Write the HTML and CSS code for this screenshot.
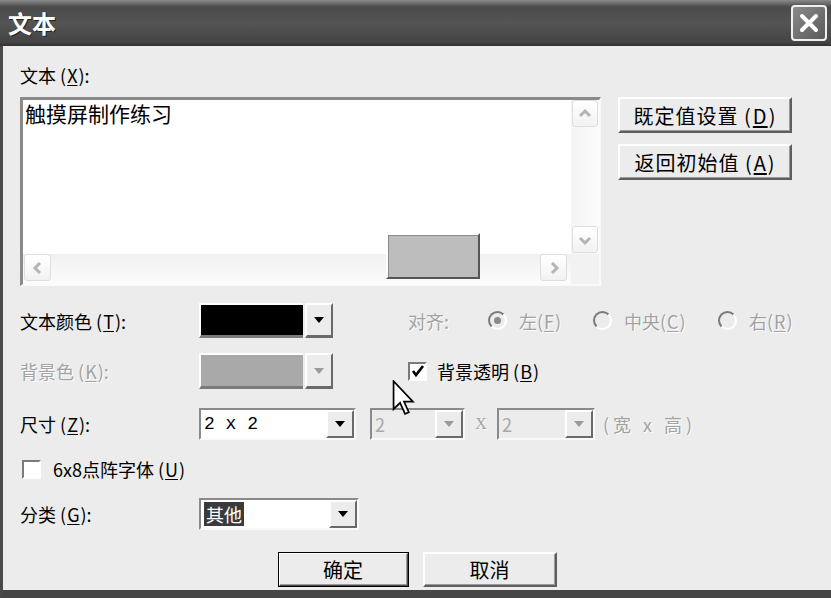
FILE: index.html
```html
<!DOCTYPE html>
<html lang="zh-CN">
<head>
    <meta charset="UTF-8">
    <meta name="viewport" content="width=device-width, initial-scale=1.0">
    <title>文本</title>
    <link rel="stylesheet" href="styles.css">
</head>
<body>
    <div class="dialog">
        <!-- Title bar -->
        <div class="titlebar">
            <span class="title">文本</span>
            <span class="close">
                <svg width="22" height="22" viewBox="0 0 22 22">
                    <path d="M4 4 L18 18 M18 4 L4 18" stroke="#fff" stroke-width="4" stroke-linecap="round"/>
                </svg>
            </span>
        </div>

        <div class="body">
            <div class="label-top">文本 (<u>X</u>):</div>

            <!-- Text box with the two side buttons -->
            <div class="text-row">
                <div class="textbox">
                    <div class="text-content">触摸屏制作练习</div>
                    <div class="vscroll">
                        <span class="sbtn">
                            <svg width="16" height="16" viewBox="0 0 16 16"><polyline points="3,10 8,5 13,10" fill="none" stroke="#b4b4b4" stroke-width="3"/></svg>
                        </span>
                        <span class="sbtn">
                            <svg width="16" height="16" viewBox="0 0 16 16"><polyline points="3,6 8,11 13,6" fill="none" stroke="#b4b4b4" stroke-width="3"/></svg>
                        </span>
                    </div>
                    <div class="hscroll">
                        <span class="sbtn">
                            <svg width="16" height="16" viewBox="0 0 16 16"><polyline points="10,3 5,8 10,13" fill="none" stroke="#b4b4b4" stroke-width="3"/></svg>
                        </span>
                        <span class="sbtn">
                            <svg width="16" height="16" viewBox="0 0 16 16"><polyline points="6,3 11,8 6,13" fill="none" stroke="#b4b4b4" stroke-width="3"/></svg>
                        </span>
                    </div>
                    <div class="corner"></div>
                    <!-- gray preview box sitting over the edit area -->
                    <div class="swatch"></div>
                </div>
                <div class="side-buttons">
                    <button type="button" class="btn side">既定值设置 (<u>D</u>)</button>
                    <button type="button" class="btn side">返回初始值 (<u>A</u>)</button>
                </div>
            </div>

            <!-- Text colour + alignment -->
            <div class="row row-color">
                <span class="label">文本颜色 (<u>T</u>):</span>
                <div class="color-combo">
                    <span class="color-field black"></span>
                    <span class="drop-btn"><i class="tri"></i></span>
                </div>
                <div class="align disabled">
                    <span class="align-label">对齐:</span>
                    <span class="radio-opt opt-left"><i class="radio checked"></i><span>左(<u>F</u>)</span></span>
                    <span class="radio-opt opt-center"><i class="radio"></i><span>中央(<u>C</u>)</span></span>
                    <span class="radio-opt"><i class="radio"></i><span>右(<u>R</u>)</span></span>
                </div>
            </div>

            <!-- Background colour + transparent -->
            <div class="row row-bg">
                <span class="label disabled">背景色 (<u>K</u>):</span>
                <div class="color-combo">
                    <span class="color-field gray"></span>
                    <span class="drop-btn"><i class="tri light"></i></span>
                </div>
                <label class="check-opt bg-check">
                    <span class="checkbox">
                        <svg width="14" height="14" viewBox="0 0 14 14"><polyline points="2,7 5,11 12,2" fill="none" stroke="#000" stroke-width="2.6"/></svg>
                    </span>
                    <span>背景透明 (<u>B</u>)</span>
                </label>
            </div>

            <!-- Size -->
            <div class="row row-size">
                <span class="label">尺寸 (<u>Z</u>):</span>
                <div class="combo size-main">
                    <span class="combo-value mono">2 x 2</span>
                    <span class="combo-btn"><i class="tri"></i></span>
                </div>
                <div class="combo size-w off">
                    <span class="combo-value">2</span>
                    <span class="combo-btn"><i class="tri light"></i></span>
                </div>
                <span class="times disabled">X</span>
                <div class="combo size-h off">
                    <span class="combo-value">2</span>
                    <span class="combo-btn"><i class="tri light"></i></span>
                </div>
                <span class="size-note disabled">(宽 x 高)</span>
            </div>

            <!-- Dot font -->
            <div class="row row-dot">
                <label class="check-opt">
                    <span class="checkbox"></span>
                    <span>6x8点阵字体 (<u>U</u>)</span>
                </label>
            </div>

            <!-- Category -->
            <div class="row row-cat">
                <span class="label">分类 (<u>G</u>):</span>
                <div class="combo cat">
                    <span class="combo-value"><span class="selected">其他</span></span>
                    <span class="combo-btn"><i class="tri"></i></span>
                </div>
            </div>

            <div class="actions">
                <button type="button" class="btn default">确定</button>
                <button type="button" class="btn cancel">取消</button>
            </div>
        </div>

        <!-- mouse pointer -->
        <svg class="pointer" width="23" height="36" viewBox="0 0 13 21">
            <path d="M0.7 0.7 V17 L4.5 13.3 L7.4 19.8 L9.6 18.8 L6.8 12.6 H12 Z" fill="#fff" stroke="#000" stroke-width="1"/>
        </svg>
    </div>
</body>
</html>
```

FILE: styles.css
```css
/* Page = the dialog itself */
body {
    margin: 0;
    font-family: "Noto Sans CJK SC", "Liberation Sans", sans-serif;
    background: #ececec;
}

.dialog {
    position: relative;
    width: 831px;
    height: 598px;
    display: flex;
    flex-direction: column;
    overflow: hidden;
}

/* Title bar */
.titlebar {
    height: 46px;
    flex: none;
    display: flex;
    align-items: center;
    justify-content: space-between;
    padding: 0 4px 0 8px;
    box-sizing: border-box;
    background: linear-gradient(to bottom, #8a8a8a 0, #666 4px, #4a4a4a 7px, #545454 50%, #444 92%, #303030 100%);
}

.title {
    color: #fff;
    font-size: 24px;
    font-weight: 700;
    line-height: 24px;
    text-shadow: 1px 1px 0 #222;
}

.close {
    width: 36px;
    height: 36px;
    box-sizing: border-box;
    border: 2px solid #f0f0f0;
    border-radius: 4px;
    background: linear-gradient(135deg, #8a8a8a, #5a5a5a);
    display: flex;
    align-items: center;
    justify-content: center;
}

/* Dialog body */
.body {
    flex: 1;
    border-left: 3px solid #4a4a4a;
    border-bottom: 8px solid #464646;
    padding: 18px 17px 0 17px;
    font-size: 18px;
    color: #000;
    line-height: 22px;
}

u {
    text-decoration: underline;
    text-underline-offset: 2px;
    margin: 0 1px;
}

.disabled {
    color: #a2a2a2;
    text-shadow: 1px 1px 0 #fff;
}

.label-top {
    height: 22px;
}

/* Edit area */
.text-row {
    display: flex;
    gap: 17px;
    margin-top: 11px;
}

.textbox {
    position: relative;
    width: 581px;
    height: 189px;
    box-sizing: border-box;
    border-top: 3px solid #8a8a8a;
    border-left: 3px solid #8a8a8a;
    border-right: 2px solid #fafafa;
    border-bottom: 2px solid #fafafa;
    background: #fff;
    display: grid;
    grid-template-columns: 1fr 28px;
    grid-template-rows: 1fr 30px;
}

.text-content {
    padding: 1px 0 0 2px;
    font-size: 21px;
    line-height: 24px;
}

.vscroll {
    display: flex;
    flex-direction: column;
    justify-content: space-between;
    padding: 0 1px 1px 1px;
    background: linear-gradient(to right, #f4f4f4, #fbfbfb);
}

.hscroll {
    display: flex;
    justify-content: space-between;
    padding: 0 4px 2px 1px;
    background: linear-gradient(to bottom, #f0f0f0, #fcfcfc);
}

.corner {
    background: #f2f2f2;
}

.sbtn {
    width: 27px;
    height: 27px;
    box-sizing: border-box;
    border: 1px solid #dedede;
    border-radius: 3px;
    background: linear-gradient(to bottom, #fff, #f2f2f2);
    display: flex;
    align-items: center;
    justify-content: center;
}

.vscroll .sbtn {
    width: 26px;
}

.swatch {
    position: absolute;
    left: 363px;
    top: 133px;
    width: 94px;
    height: 46px;
    box-sizing: border-box;
    background: #bdbdbd;
    border: 2px solid;
    border-color: #fff #555 #555 #fff;
    box-shadow: inset 1px 1px 0 #8a8a8a;
}

.side-buttons {
    display: flex;
    flex-direction: column;
    gap: 11px;
}

/* Push buttons */
.btn {
    font-family: inherit;
    font-size: 19px;
    color: #000;
    background: #ececec;
    border: 2px solid;
    border-color: #fff #5e5e5e #5e5e5e #fff;
    box-shadow: inset -1px -1px 0 #9a9a9a;
    padding: 0;
    cursor: pointer;
}

.btn.side {
    width: 174px;
    height: 36px;
    font-size: 20px;
    letter-spacing: 1px;
}

/* Rows of controls */
.row {
    display: flex;
    align-items: center;
}

.label {
    width: 179px;
    flex: none;
}

.row-color {
    margin-top: 17px;
    height: 35px;
}

.row-bg {
    margin-top: 15px;
    height: 36px;
}

.row-size {
    margin-top: 19px;
    height: 32px;
}

.row-dot {
    margin-top: 19px;
    height: 20px;
}

.row-cat {
    margin-top: 19px;
    height: 32px;
}

/* Colour pickers */
.color-combo {
    display: flex;
    width: 134px;
    height: 100%;
}

.color-field {
    flex: 1;
    border-top: 2px solid #fff;
    border-left: 2px solid #fff;
    border-bottom: 3px solid #7a7a7a;
    margin-right: 2px;
}

.color-field.black {
    background: #000;
}

.color-field.gray {
    background: #a9a9a9;
}

.drop-btn {
    width: 28px;
    box-sizing: border-box;
    background: #ececec;
    border: 2px solid;
    border-color: #fff #6a6a6a #6a6a6a #fff;
    border-bottom-width: 3px;
    display: flex;
    align-items: center;
    justify-content: center;
}

.tri {
    width: 0;
    height: 0;
    border-left: 5px solid transparent;
    border-right: 5px solid transparent;
    border-top: 6px solid #000;
}

.tri.light {
    border-top-color: #9a9a9a;
}

/* Alignment radios */
.align {
    display: flex;
    align-items: center;
    margin-left: 75px;
}

.align-label {
    width: 80px;
}

.radio-opt {
    display: flex;
    align-items: center;
    gap: 12px;
}

.opt-left {
    width: 105px;
}

.opt-center {
    width: 125px;
}

.radio {
    width: 19px;
    height: 19px;
    box-sizing: border-box;
    border-radius: 50%;
    border: 2px solid;
    border-color: #7a7a7a #fff #fff #7a7a7a;
    background: #ececec;
    display: flex;
    align-items: center;
    justify-content: center;
}

.radio.checked::after {
    content: "";
    width: 7px;
    height: 7px;
    border-radius: 50%;
    background: #8a8a8a;
}

/* Checkboxes */
.check-opt {
    display: flex;
    align-items: center;
    gap: 10px;
}

.bg-check {
    margin-left: 75px;
}

.row-dot .check-opt {
    margin-left: 2px;
    gap: 12px;
}

.checkbox {
    width: 19px;
    height: 19px;
    box-sizing: border-box;
    border: 2px solid;
    border-color: #7a7a7a #fff #fff #7a7a7a;
    background: #fff;
    display: flex;
    align-items: center;
    justify-content: center;
}

/* Drop-down lists */
.combo {
    display: flex;
    height: 32px;
    box-sizing: border-box;
    border: 2px solid;
    border-color: #8a8a8a #fafafa #fafafa #8a8a8a;
    background: #fff;
}

.combo-value {
    flex: 1;
    padding-left: 3px;
    display: flex;
    align-items: center;
}

.combo-btn {
    width: 28px;
    box-sizing: border-box;
    background: #ececec;
    border: 2px solid;
    border-color: #fff #6a6a6a #6a6a6a #fff;
    display: flex;
    align-items: center;
    justify-content: center;
}

.mono {
    font-family: "Liberation Mono", monospace;
    font-size: 18px;
}

.size-main {
    width: 157px;
}

.size-w {
    width: 95px;
    margin-left: 14px;
}

.size-h {
    width: 98px;
}

.combo.off {
    background: #ececec;
}

.combo.off .combo-value {
    color: #a8a8a8;
}

.times {
    width: 32px;
    text-align: center;
    font-family: "Liberation Serif", serif;
    font-size: 16px;
}

.size-note {
    margin-left: 8px;
    letter-spacing: 4px;
}

.cat {
    width: 160px;
}

.selected {
    background: #3a3a3a;
    color: #fff;
    padding: 0 2px;
    line-height: 24px;
}

/* OK / Cancel */
.actions {
    display: flex;
    justify-content: center;
    gap: 14px;
    margin-top: 22px;
}

.actions .btn {
    height: 35px;
    font-size: 20px;
}

.btn.default {
    width: 131px;
    outline: 1px solid #000;
    outline-offset: -1px;
    border-color: #fff #4a4a4a #4a4a4a #fff;
}

.btn.cancel {
    width: 134px;
}

/* Mouse pointer over the dialog */
.pointer {
    position: absolute;
    left: 392px;
    top: 380px;
}
```
